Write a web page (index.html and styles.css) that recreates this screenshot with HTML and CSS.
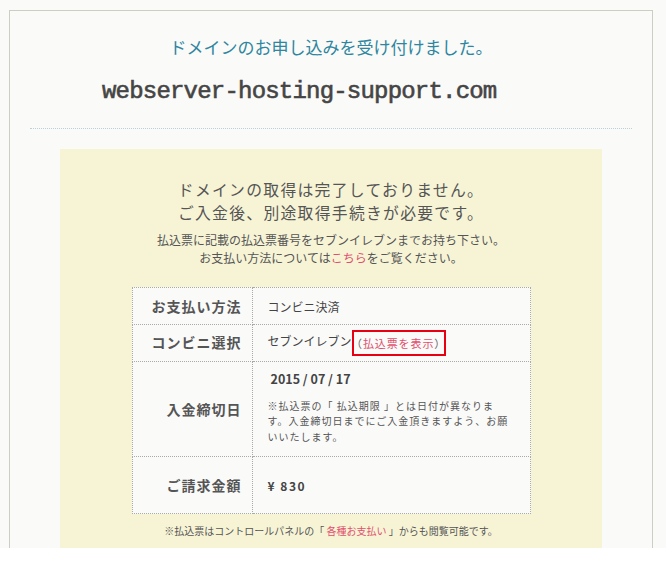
FILE: index.html
```html
<!DOCTYPE html>
<html lang="ja">
<head>
<meta charset="utf-8">
<title>ドメインのお申し込み</title>
<link rel="stylesheet" href="styles.css">
</head>
<body>
<div class="page">
  <div class="frame">
    <h1 class="title">ドメインのお申し込みを受け付けました。</h1>
    <p class="domain">webserver-hosting-support.com</p>
    <hr class="rule">
    <section class="notice">
      <h2 class="lead">ドメインの取得は完了しておりません。<br>ご入金後、別途取得手続きが必要です。</h2>
      <p class="guide">払込票に記載の払込票番号をセブンイレブンまでお持ち下さい。<br>お支払い方法については<a class="link" href="#">こちら</a>をご覧ください。</p>
      <table class="info">
        <tr class="r1"><th>お支払い方法</th><td>コンビニ決済</td></tr>
        <tr class="r2"><th>コンビニ選択</th><td>セブンイレブン<span class="slip">（<a class="link" href="#">払込票を表示</a>）</span></td></tr>
        <tr class="r3"><th>入金締切日</th><td><p class="date">2015 / 07 / 17</p><p class="note">※払込票の「 払込期限 」とは日付が異なりま<br>す。入金締切日までにご入金頂きますよう、お願<br>いいたします。</p></td></tr>
        <tr class="r4"><th>ご請求金額</th><td class="amount">¥ 830</td></tr>
      </table>
      <p class="foot">※払込票はコントロールパネルの「 <a class="link" href="#">各種お支払い</a> 」からも閲覧可能です。</p>
    </section>
  </div>
</div>
</body>
</html>
```
FILE: styles.css
```css
* { box-sizing: border-box; }
body {
  margin: 0;
  background: #fff;
  font-family: "Noto Sans CJK JP", "Noto Sans", sans-serif;
}
.page {
  height: 548px;
  overflow: hidden;
  background: #fafaf8;
  padding: 10px 13px 0 9px;
}
.frame {
  height: 538px;
  border: 1px solid #cdcdc3;
  border-bottom: 0;
}
.title {
  margin: 26px 0 0;
  font-size: 17px;
  line-height: 20px;
  font-weight: normal;
  color: #2e86a0;
  text-align: center;
}
.domain {
  margin: 20px 0 0;
  padding-left: 92px;
  font-family: "Liberation Mono", monospace;
  font-weight: normal;
  font-size: 24px;
  line-height: 30px;
  letter-spacing: -0.8px;
  color: #454545;
  -webkit-text-stroke: 0.6px #454545;
}
.rule {
  margin: 21px 20px 0;
  height: 0;
  border: 0;
  border-top: 1px dotted #b9d2d6;
}
.notice {
  margin: 20px 50px 0;
  padding: 29px 0 10px;
  background: #f7f4d6;
  text-align: center;
}
.lead {
  margin: 0;
  font-size: 15.8px;
  line-height: 23px;
  letter-spacing: 1.3px;
  font-weight: normal;
  color: #555;
}
.guide {
  margin: 7px 0 0;
  font-size: 12px;
  line-height: 18px;
  color: #555;
}
.link {
  color: #e0506e;
  text-decoration: none;
}
.info {
  margin: 20px auto 0;
  width: 399px;
  border-collapse: collapse;
  background: #fafaf9;
  text-align: left;
}
.info th,
.info td {
  border: 1px dotted #aaa;
}
.info th {
  width: 120px;
  padding: 0 10px 0 0;
  text-align: right;
  font-size: 14px;
  font-weight: bold;
  letter-spacing: 1px;
  color: #555;
  vertical-align: middle;
}
.info td {
  padding: 0 15px;
  font-size: 12px;
  color: #444;
  vertical-align: middle;
}
.r1 th { height: 37px; }
.r2 th { height: 37px; }
.r3 th { height: 95px; }
.r4 th { height: 57px; }
.r2 th { padding-bottom: 3px; }
.r3 td {
  vertical-align: top;
  padding-top: 8px;
}
.slip {
  display: inline-block;
  vertical-align: middle;
  border: 2px solid #e60012;
  padding: 2px 3px;
  font-size: 11px;
  line-height: 18px;
  letter-spacing: 0.9px;
  font-feature-settings: "halt";
  color: #666;
}
.date {
  margin: 0;
  padding-left: 3px;
  font-size: 12.5px;
  line-height: 18px;
  font-weight: bold;
  color: #444;
}
.note {
  margin: 10px 0 0;
  font-size: 10px;
  line-height: 15.3px;
  letter-spacing: 1px;
  color: #555;
  white-space: nowrap;
}
.amount {
  font-size: 17px;
  font-weight: bold;
  letter-spacing: 1.5px;
}
.foot {
  margin: 9px 0 0;
  font-size: 10px;
  line-height: 16px;
  color: #555;
}
```
